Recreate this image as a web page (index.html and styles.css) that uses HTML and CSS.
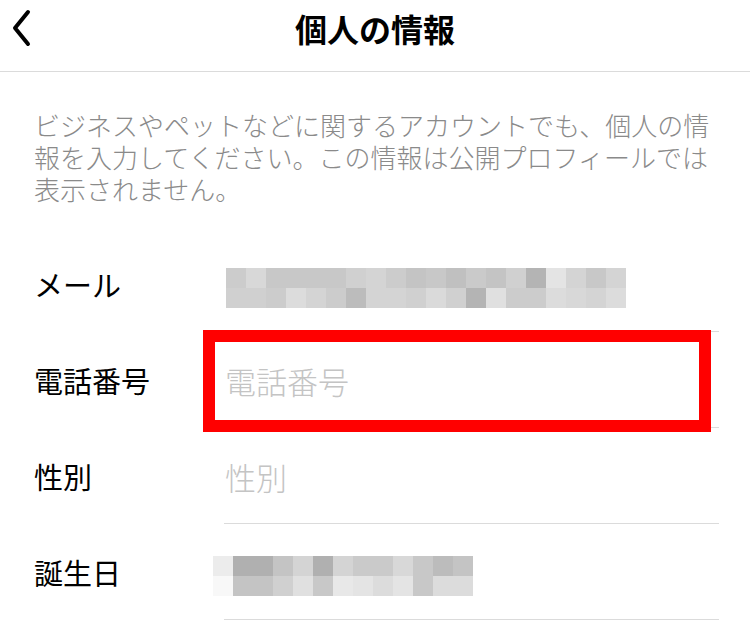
FILE: index.html
```html
<!DOCTYPE html>
<html lang="ja">
	<head>
		<meta charset="utf-8">
		<title>個人の情報</title>
		<link rel="stylesheet" href="styles.css">
	</head>
	<body>
		<div class="header">
			<svg class="back" viewBox="0 0 20 38"><path d="M16 3 L3 19 L16 35"/></svg>
			<h1 class="title">個人の情報</h1>
			<div></div>
		</div>
		<p class="desc">ビジネスやペットなどに関するアカウントでも、個人の情報を入力してください。この情報は公開プロフィールでは表示されません。</p>
		<div class="form">
			<div class="row">
				<label class="lbl">メール</label>
				<div class="val"><div class="mosaic" id="mail_mosaic"></div></div>
			</div>
			<div class="row">
				<label class="lbl">電話番号</label>
				<div class="val">
					<span class="ph">電話番号</span>
					<div class="mark"></div>
				</div>
			</div>
			<div class="row">
				<label class="lbl">性別</label>
				<div class="val"><span class="ph">性別</span></div>
			</div>
			<div class="row">
				<label class="lbl">誕生日</label>
				<div class="val"><div class="mosaic bday" id="bday_mosaic"></div></div>
			</div>
		</div>

		<script>
			// blurred values, one grey per block
			var mail = [
				['cc','d8','c8','c8','c8','c8','d0','d4','cc','c4','c8','c0','ca','c4','d0','b4','e4','d4','c8','d4'],
				['d0','d0','cc','dc','d4','cc','bc','d4','d4','d0','da','d0','b4','e0','cc','cc','dc','d8','d4','dc']
			];
			var bday = [
				['ec','b0','b0','c4','d4','b0','d4','ca','ca','d8','c8','bc','c4'],
				['f8','c4','c4','d0','e0','c8','e8','e4','dc','e4','c8','dc','dc']
			];

			function fill_mosaic(id, rows){
				var s = '';
				rows.forEach(function(row){
					row.forEach(function(g){
						s += '<span style="background:#'+g+g+g+'"></span>';
					});
				});
				var el = document.getElementById(id);
				el.style.gridTemplateColumns = 'repeat('+rows[0].length+',20px)';
				el.innerHTML = s;
			}

			fill_mosaic('mail_mosaic', mail);
			fill_mosaic('bday_mosaic', bday);
		</script>
	</body>
</html>
```

FILE: styles.css
```css
*{margin:0px;padding:0px;box-sizing:border-box;}
body{width:750px;height:641px;overflow:hidden;background:#fff;color:#000;font-family:"Noto Sans CJK JP","Noto Sans",sans-serif;}

.header{height:72px;border-bottom:1px solid #dbdbdb;display:grid;grid-template-columns:1fr auto 1fr;align-items:start;}
.back{width:20px;height:38px;margin:9px 0 0 12px;fill:none;stroke:#000;stroke-width:4;stroke-linecap:round;stroke-linejoin:round;}
.title{font-size:32px;font-weight:700;line-height:56px;}

.desc{padding:37px 36px 0 34px;font-size:26px;font-weight:300;line-height:32px;color:#8a8a8a;}

.form{margin-top:31px;}
.row{display:grid;grid-template-columns:190px 495px;padding-left:34px;height:96px;}
.lbl{font-size:29px;display:flex;align-items:center;}
.val{position:relative;display:flex;align-items:center;border-bottom:1px solid #dbdbdb;}
.ph{font-size:31px;font-weight:300;color:#c4c4c4;margin-left:1px;padding-top:1px;}

.mosaic{display:grid;grid-auto-rows:20px;margin:9px 0 0 2px;}
.mosaic span{display:block;}
.bday{margin-left:-11px;margin-top:8px;}

.mark{position:absolute;left:-21px;top:-2px;width:508px;height:102px;border:12px solid #ff0000;}
```
